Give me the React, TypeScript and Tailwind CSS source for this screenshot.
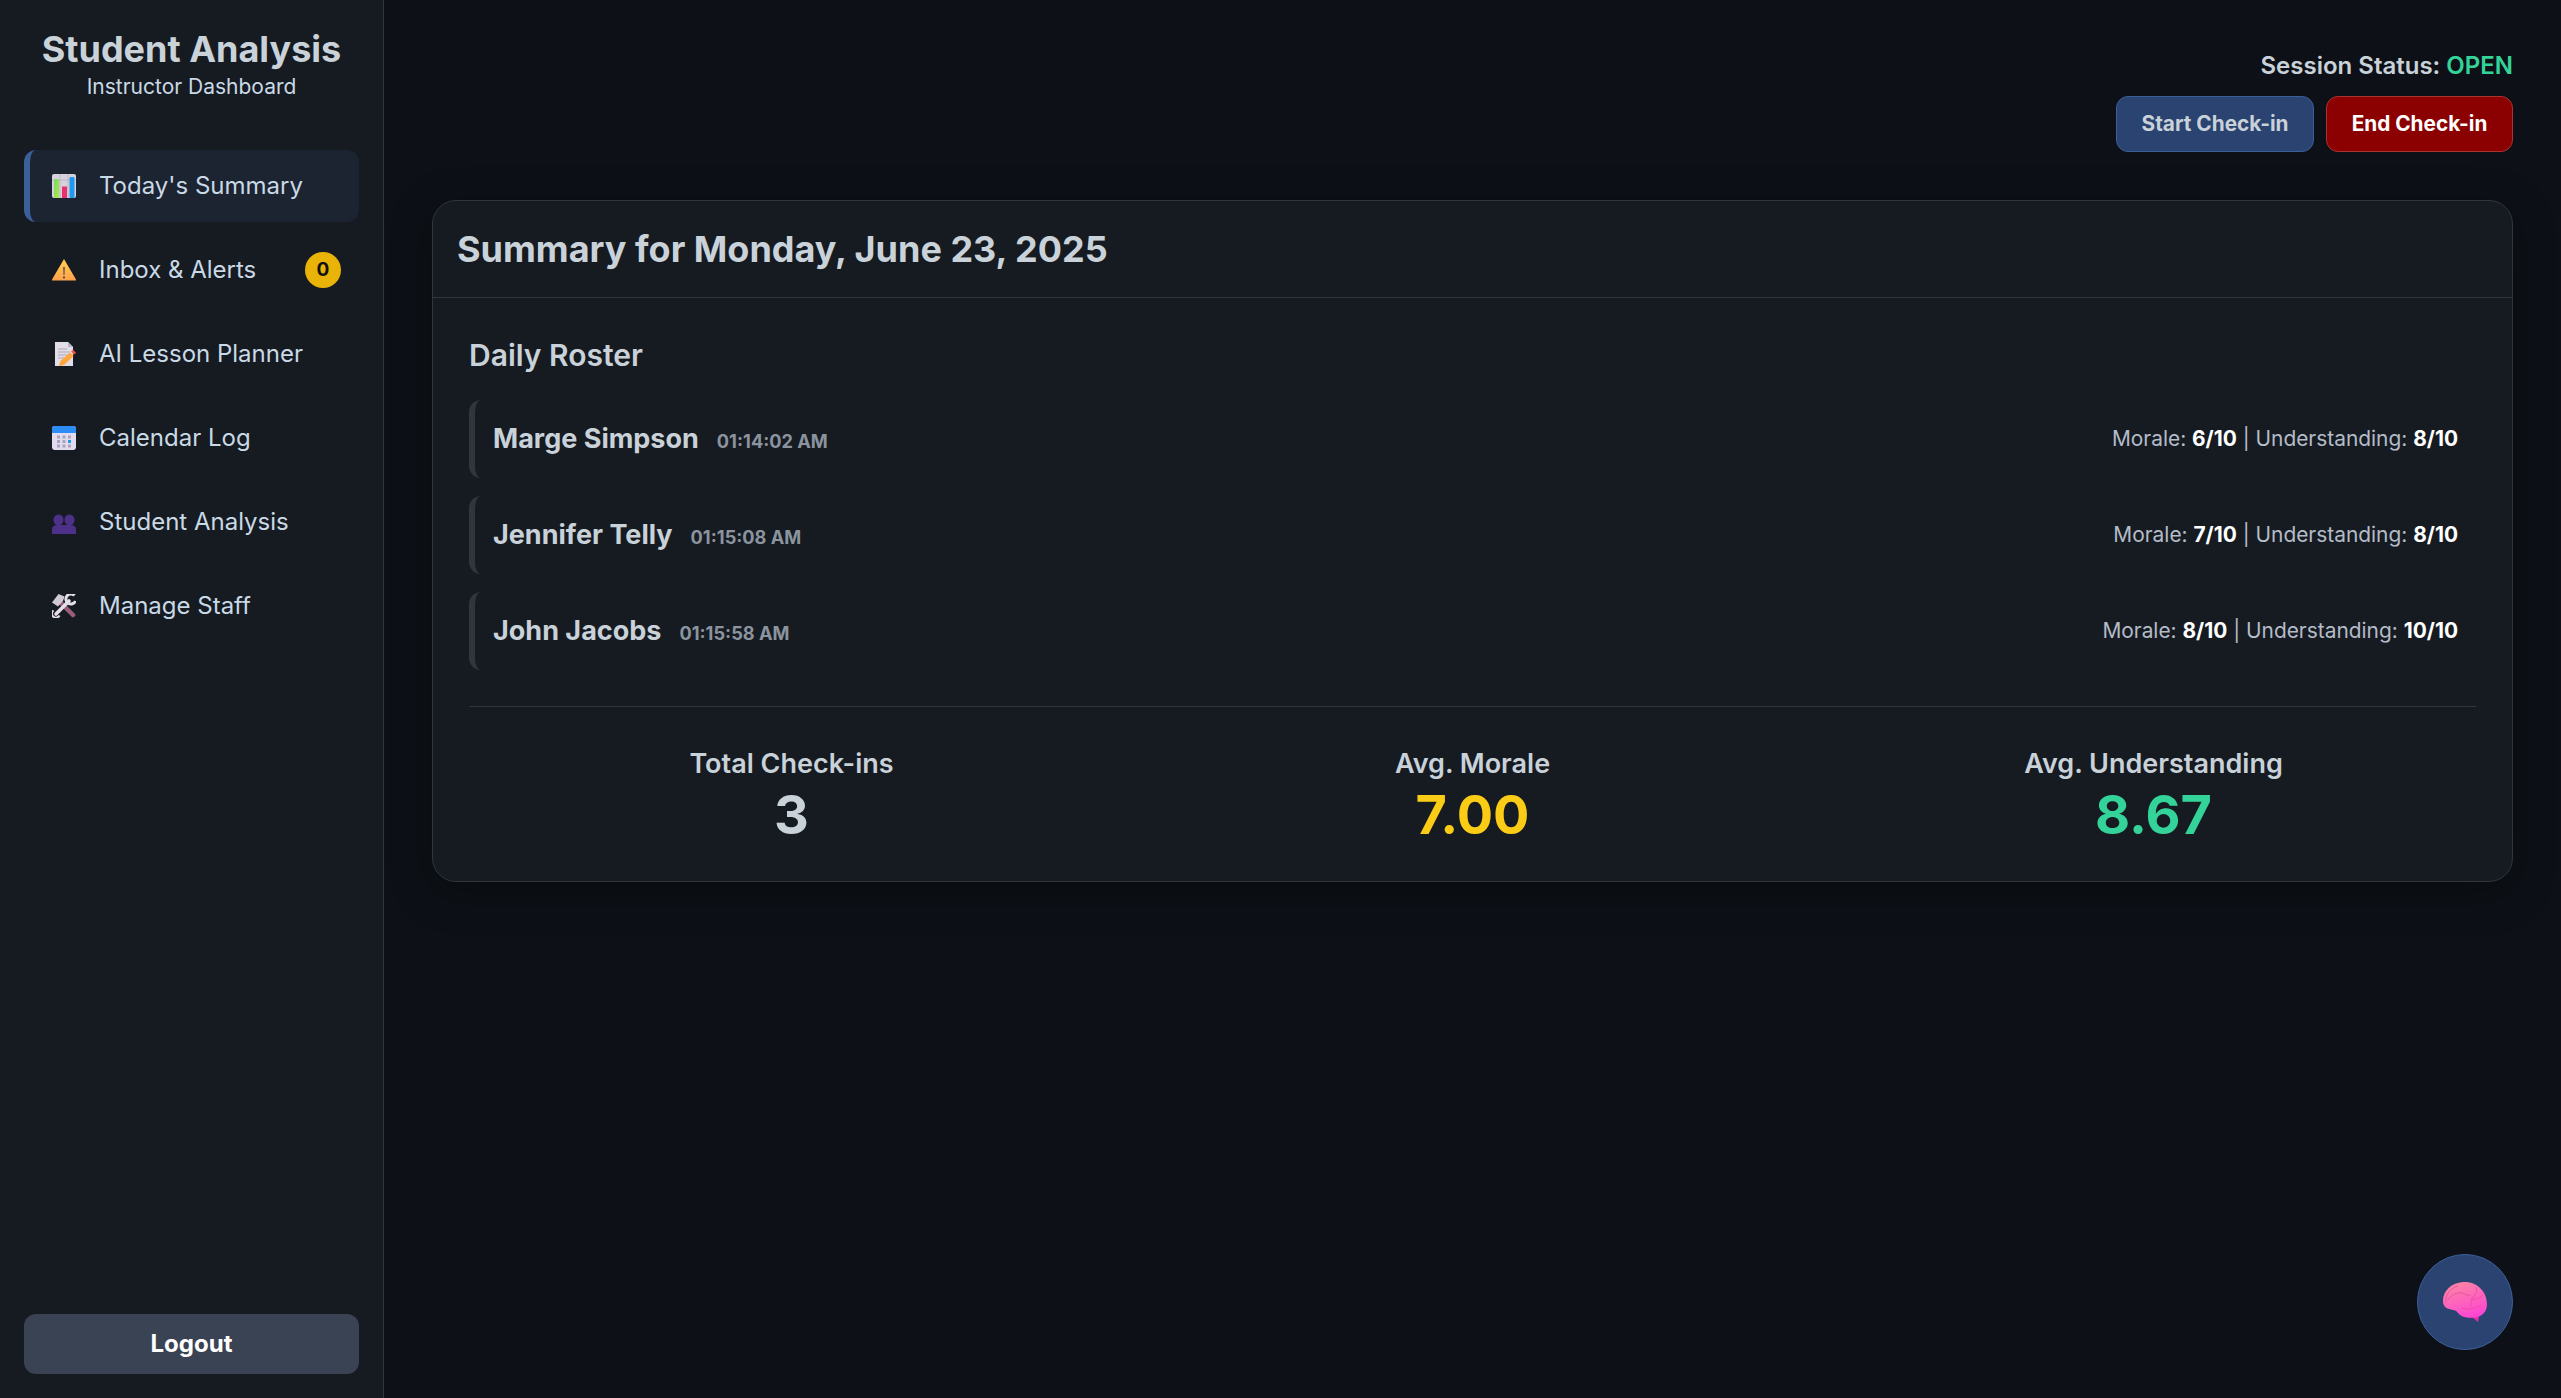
const font = { fontFamily: "Inter, sans-serif" };

function ChartIcon() {
  return (
    <svg viewBox="0 0 24 24" className="h-6 w-6 shrink-0">
      <defs>
        <linearGradient id="barGreen" x1="0" y1="0" x2="1" y2="1">
          <stop offset="0" stopColor="#6fdc6a" />
          <stop offset="1" stopColor="#b6e83c" />
        </linearGradient>
      </defs>
      <rect x="0" y="0" width="24" height="24" rx="2" fill="#d6d2dc" />
      <path d="M0 6h24M8 0v24M16 0v24" stroke="#b6b0bf" strokeWidth="0.7" />
      <rect x="2" y="5" width="5" height="19" rx="1" fill="url(#barGreen)" />
      <rect x="10" y="12.5" width="5" height="11.5" fill="#e8316f" />
      <rect x="17.5" y="3" width="5" height="21" rx="1" fill="#1f9af0" />
    </svg>
  );
}

function WarningIcon() {
  return (
    <svg viewBox="0 0 24 24" className="h-6 w-6 shrink-0">
      <defs>
        <linearGradient id="warn" x1="0" y1="0" x2="0" y2="1">
          <stop offset="0" stopColor="#ffd24d" />
          <stop offset="1" stopColor="#ffa04d" />
        </linearGradient>
      </defs>
      <path d="M12 1 24.6 22.5H-.6Z" fill="url(#warn)" />
      <path d="M11.2 9h1.6l-.3 8h-1Z" fill="#5a4a45" />
      <circle cx="12" cy="19.4" r="1.1" fill="#5a4a45" />
    </svg>
  );
}

function MemoIcon() {
  return (
    <svg viewBox="0 0 24 24" className="h-6 w-6 shrink-0">
      <path d="M3 0h13l5 5v19H3Z" fill="#e3dde8" />
      <path d="M16 0l5 5h-5Z" fill="#b9b2c4" />
      <path d="M6 7h9M6 10h12M6 13h10M6 16h6" stroke="#a8a2b3" strokeWidth="0.9" />
      <path d="M7 24l1.4-5L18 10.5l3.6 3.6L12 23Z" fill="#ffa63d" />
      <path d="M19 9.5l2-1.8 3 3-2 2Z" fill="#f8553f" />
    </svg>
  );
}

function CalendarIcon() {
  return (
    <svg viewBox="0 0 24 24" className="h-6 w-6 shrink-0">
      <rect x="0" y="0" width="24" height="24" rx="3" fill="#e2dcee" />
      <path d="M0 7V3a3 3 0 0 1 3-3h18a3 3 0 0 1 3 3v4Z" fill="#2f8bf5" />
      <g fill="#a9a3bd">
        <rect x="5" y="9.5" width="3" height="3" />
        <rect x="10.5" y="9.5" width="3" height="3" />
        <rect x="16" y="9.5" width="3" height="3" />
        <rect x="5" y="14" width="3" height="3" />
        <rect x="10.5" y="14" width="3" height="3" />
        <rect x="5" y="18.5" width="3" height="3" />
        <rect x="10.5" y="18.5" width="3" height="3" />
        <rect x="16" y="18.5" width="3" height="3" />
      </g>
      <rect x="16" y="14" width="3" height="3" fill="#1f9af0" />
    </svg>
  );
}

function BustsIcon() {
  return (
    <svg viewBox="0 0 24 24" className="h-6 w-6 shrink-0">
      <g fill="#4d3088">
        <ellipse cx="6.5" cy="10" rx="5" ry="5.5" />
        <ellipse cx="17.5" cy="10" rx="5" ry="5.5" />
        <path d="M0 24v-4.5C0 16.5 2 15 6 15h12c4 0 6 1.500 6 4.500V24Z" />
      </g>
    </svg>
  );
}

function ToolsIcon() {
  return (
    <svg viewBox="0 0 24 24" className="h-6 w-6 shrink-0">
      <path d="M7 7 21 21" stroke="#9a5f78" strokeWidth="4.500" strokeLinecap="round" />
      <path d="M0 8.500 6.500 0l6 2.500-1.500 4.500-5 5.500Z" fill="#cfc9d6" />
      <path d="M4 20 17 7" stroke="#e4dfe9" strokeWidth="3.600" strokeLinecap="round" />
      <path d="M22.500 1.500a5 5 0 1 0 1 5.500" fill="none" stroke="#e4dfe9" strokeWidth="3" />
      <path d="M1.500 16.500a4 4 0 1 0 6 5" fill="none" stroke="#e4dfe9" strokeWidth="2" />
    </svg>
  );
}

function BrainIcon() {
  return (
    <svg viewBox="0 0 44 40" className="h-10 w-11">
      <defs>
        <linearGradient id="brain" x1="0.1" y1="0" x2="0.5" y2="1">
          <stop offset="0" stopColor="#fb8aa0" />
          <stop offset="1" stopColor="#ff48d2" />
        </linearGradient>
      </defs>
      <path d="M29 35l6 5 1-6Z" fill="#e92bb0" />
      <path d="M0 19C0 8 9 1 20 0 33-1 44 9 44 22 44 30 39 35 31 35.500 26 36 19 36 15 31 13 28 10 28 6 27 2 26 0 23 0 19Z" fill="url(#brain)" />
      <path d="M3 20C2 12 8 6 15 4M5 18c3-5 9-8 14-7 3 1 5 3 8 2M33 5c2 5-1 9-5 12 5 1 9-1 12-4M18 26c6 2 14 1 20-3M29 18l-2 7" fill="none" stroke="#e8509f" strokeWidth="0.9" />
    </svg>
  );
}

const NAV = [
  { label: "Today's Summary", icon: <ChartIcon />, active: true },
  { label: "Inbox & Alerts", icon: <WarningIcon />, badge: 0 },
  { label: "AI Lesson Planner", icon: <MemoIcon /> },
  { label: "Calendar Log", icon: <CalendarIcon /> },
  { label: "Student Analysis", icon: <BustsIcon /> },
  { label: "Manage Staff", icon: <ToolsIcon /> },
];

const ROSTER = [
  { name: "Marge Simpson", time: "01:14:02 AM", morale: "6/10", understanding: "8/10" },
  { name: "Jennifer Telly", time: "01:15:08 AM", morale: "7/10", understanding: "8/10" },
  { name: "John Jacobs", time: "01:15:58 AM", morale: "8/10", understanding: "10/10" },
];

const STATS = [
  { label: "Total Check-ins", value: "3", color: "text-[#c9d1d9]" },
  { label: "Avg. Morale", value: "7.00", color: "text-[#facc15]" },
  { label: "Avg. Understanding", value: "8.67", color: "text-[#34d399]" },
];

export default function App() {
  return (
    <div style={font} className="flex h-screen overflow-hidden bg-[#0d1117] text-[#c9d1d9]">
      <aside className="flex w-[384px] shrink-0 flex-col border-r border-[#30363d] bg-[#161b22] px-6 pb-6 pt-[26px]">
        <div className="text-center">
          <h1 className="text-[36px] font-bold leading-[46px]">Student Analysis</h1>
          <p className="text-[21px] leading-[30px] text-[#c9d9e6]">Instructor Dashboard</p>
        </div>
        <nav className="mt-[48px] flex flex-col gap-3">
          {NAV.map((item) => (
            <div
              key={item.label}
              className={`flex h-[72px] items-center rounded-xl border-l-[6px] pl-[22px] pr-[18px] text-[24px] ${
                item.active ? "border-[#3b5f99] bg-[#1c2331]" : "border-transparent"
              }`}
            >
              {item.icon}
              <span className="ml-[23px] text-[#c9d9e6]">{item.label}</span>
              {item.badge !== undefined && (
                <span className="ml-auto flex h-9 w-9 items-center justify-center rounded-full bg-[#eab308] text-[19px] font-bold text-[#111]">
                  {item.badge}
                </span>
              )}
            </div>
          ))}
        </nav>
        <button className="mt-auto h-[60px] rounded-xl bg-[#3a4354] text-[24px] font-bold text-white">Logout</button>
      </aside>

      <main className="flex min-w-0 flex-1 flex-col px-12 pt-[49px]">
        <div className="flex flex-col items-end">
          <p className="text-[24px] font-semibold leading-[34px]">
            Session Status: <span className="text-[#34d399]">OPEN</span>
          </p>
          <div className="mt-[13px] flex gap-[12px]">
            <button className="h-[56px] w-[198px] rounded-xl border border-[#3b5f99] bg-[#2a4371] text-[20.8px] font-bold">
              Start Check-in
            </button>
            <button className="h-[56px] w-[187px] rounded-xl border border-[#a33] bg-[#8b0000] text-[20.8px] font-bold text-white">
              End Check-in
            </button>
          </div>
        </div>

        <section className="mt-[48px] rounded-3xl border border-[#30363d] bg-[#161b22] shadow-[0_10px_40px_rgba(0,0,0,0.35)]">
          <div className="flex h-[97px] items-center border-b border-[#30363d] px-6">
            <h2 className="text-[36px] font-bold">Summary for Monday, June 23, 2025</h2>
          </div>
          <div className="px-9 pb-[34px] pt-[36px]">
            <h3 className="text-[30px] font-semibold leading-[42px]">Daily Roster</h3>
            <ul className="mt-[24px] flex flex-col gap-[18px]">
              {ROSTER.map((r) => (
                <li key={r.name} className="flex h-[78px] items-center justify-between rounded-xl border-l-[6px] border-[#30363d] pl-[18px] pr-[18px]">
                  <div className="flex items-baseline">
                    <span className="text-[27px] font-bold">{r.name}</span>
                    <span className="ml-[18px] text-[18.2px] font-bold text-[#8b949e]">{r.time}</span>
                  </div>
                  <div className="text-[20.9px] text-[#b4bcc8]">
                    Morale: <strong className="text-white">{r.morale}</strong> | Understanding:{" "}
                    <strong className="text-white">{r.understanding}</strong>
                  </div>
                </li>
              ))}
            </ul>
            <div className="mt-[36px] grid grid-cols-3 gap-9 border-t border-[#30363d] pt-[38px] text-center">
              {STATS.map((s) => (
                <div key={s.label}>
                  <div className="text-[27px] font-semibold leading-[38px]">{s.label}</div>
                  <div className={`text-[54px] font-bold leading-[64px] ${s.color}`}>{s.value}</div>
                </div>
              ))}
            </div>
          </div>
        </section>
      </main>

      <button className="fixed bottom-[48px] right-[48px] flex h-24 w-24 items-center justify-center rounded-full border border-[#3b5f99] bg-[#2a4371]">
        <BrainIcon />
      </button>
    </div>
  );
}
